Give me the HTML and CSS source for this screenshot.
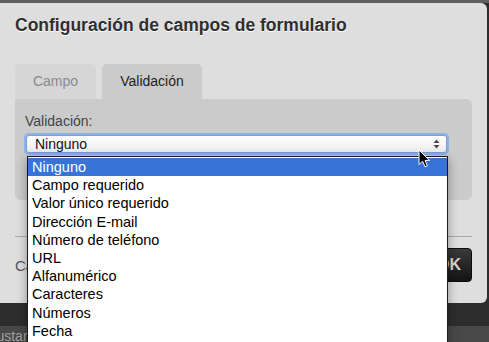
FILE: index.html
```html
<!DOCTYPE html>
<html>
  <head>
    <title>Configuración de campos de formulario</title>
    <link rel="stylesheet" href="styles.css">
  </head>
  <body>
    <div class="backdrop-top"></div>

    <div class="modal">
      <div class="modal-header">
        <h3>Configuración de campos de formulario</h3>
      </div>

      <div class="modal-body">
        <div class="tabs">
          <div class="tab">Campo</div>
          <div class="tab tab-active">Validación</div>
        </div>
        <div class="tab-panel">
          <label class="field-label">Validación:</label>
          <div class="select-box">
            <span>Ninguno</span>
            <span class="select-arrows">
              <svg width="7" height="10" viewBox="0 0 7 10">
                <path d="M3.5 0.5 L6.5 4 L0.5 4 Z" fill="#4a4a4a"/>
                <path d="M3.5 9.5 L6.5 6 L0.5 6 Z" fill="#4a4a4a"/>
              </svg>
            </span>
          </div>
        </div>
      </div>

      <div class="divider"></div>

      <div class="modal-footer">
        <button class="cancel-button">Cancelar</button>
        <button class="ok-button">OK</button>
      </div>
    </div>

    <div class="page-bar"><span class="page-bar-text">Ajustar</span></div>

    <!-- open list of the select -->
    <ul class="dropdown">
      <li class="selected">Ninguno</li>
      <li>Campo requerido</li>
      <li>Valor único requerido</li>
      <li>Dirección E-mail</li>
      <li>Número de teléfono</li>
      <li>URL</li>
      <li>Alfanumérico</li>
      <li>Caracteres</li>
      <li>Números</li>
      <li>Fecha</li>
    </ul>

    <svg class="cursor" width="13" height="20" viewBox="0 0 13 20">
      <path d="M1 1 L1 15.5 L4.6 12.2 L7 17.8 L9.3 16.8 L7 11.4 L11.6 11.4 Z" fill="#000" stroke="#fff" stroke-width="1"/>
    </svg>
  </body>
</html>
```

FILE: styles.css
```css
body {
  margin: 0;
  width: 489px;
  height: 342px;
  overflow: hidden;
  position: relative;
  background-color: #2d2d2d;
  font-family: "Liberation Sans", Arial, Helvetica, sans-serif;
}

.backdrop-top {
  height: 3px;
  background-color: #5f5f5f;
}

.modal {
  width: 487px;
  height: 300px;
  background-color: #dedede;
  border-radius: 0 6px 6px 0;
}

.modal-header {
  padding: 12px 15px 29px;
}

.modal-header h3 {
  margin: 0;
  font-size: 17.5px;
  line-height: 20px;
  font-weight: bold;
  color: #2f2f2f;
  text-shadow: 0 1px 0 #fff;
}

.modal-body {
  padding: 0 15px;
}

.tabs {
  display: flex;
  gap: 6px;
}

.tab {
  width: 81px;
  height: 35px;
  line-height: 35px;
  text-align: center;
  font-size: 14px;
  color: #8a8a8a;
  background-color: #d6d6d6;
  border-radius: 5px 5px 0 0;
}

.tab-active {
  width: 100px;
  color: #1e1e1e;
  background-color: #cbcbcb;
}

.tab-panel {
  width: 437px;
  height: 89px;
  padding: 12px 10px 0;
  box-sizing: content-box;
  background-color: #cbcbcb;
  border-radius: 0 6px 6px 6px;
}

.field-label {
  display: block;
  font-size: 14px;
  line-height: 20px;
  color: #444;
}

.select-box {
  margin-top: 4px;
  width: 421px;
  height: 18px;
  margin-left: 1px;
  display: flex;
  align-items: center;
  justify-content: space-between;
  padding: 0 6px 0 8px;
  box-sizing: border-box;
  font-size: 14px;
  color: #111;
  background: linear-gradient(#ffffff, #ececec);
  border: 1px solid #7c9fd6;
  border-radius: 3px;
  box-shadow: 0 0 0 2px #8ab2ea;
}

.select-arrows {
  display: flex;
}

.divider {
  margin: 36px 15px 0;
  height: 1px;
  background-color: #a9a9a9;
}

.modal-footer {
  display: flex;
  justify-content: space-between;
  padding: 11px 15px 0;
}

.cancel-button {
  background: transparent;
  border: none;
  padding: 0;
  height: 34px;
  font-family: "Liberation Sans", Arial, sans-serif;
  font-size: 15px;
  color: #555;
}

.ok-button {
  width: 46px;
  height: 34px;
  border: 1px solid #0d0d0d;
  border-radius: 4px;
  background: linear-gradient(#3a3a3a, #141414);
  color: #d6d6d6;
  font-family: "Liberation Sans", Arial, sans-serif;
  font-size: 16px;
  font-weight: bold;
}

.page-bar {
  margin-top: 23px;
  height: 20px;
  background-color: #484848;
  overflow: hidden;
}

.page-bar-text {
  display: block;
  margin-left: -16px;
  font-size: 14px;
  line-height: 20px;
  color: #a0a0a0;
}

.dropdown {
  position: absolute;
  left: 27px;
  top: 156px;
  width: 421px;
  height: 200px;
  margin: 0;
  padding: 1px 0 0;
  box-sizing: border-box;
  list-style: none;
  background-color: #fff;
  border: 1px solid #1a1a1a;
  box-shadow: 0 3px 10px rgba(0, 0, 0, 0.35);
}

.dropdown li {
  height: 18.2px;
  line-height: 18.2px;
  padding-left: 4px;
  font-size: 14.5px;
  color: #000;
}

.dropdown .selected {
  background-color: #3874d8;
  color: #fff;
}

.cursor {
  position: absolute;
  left: 418px;
  top: 149px;
}
```
